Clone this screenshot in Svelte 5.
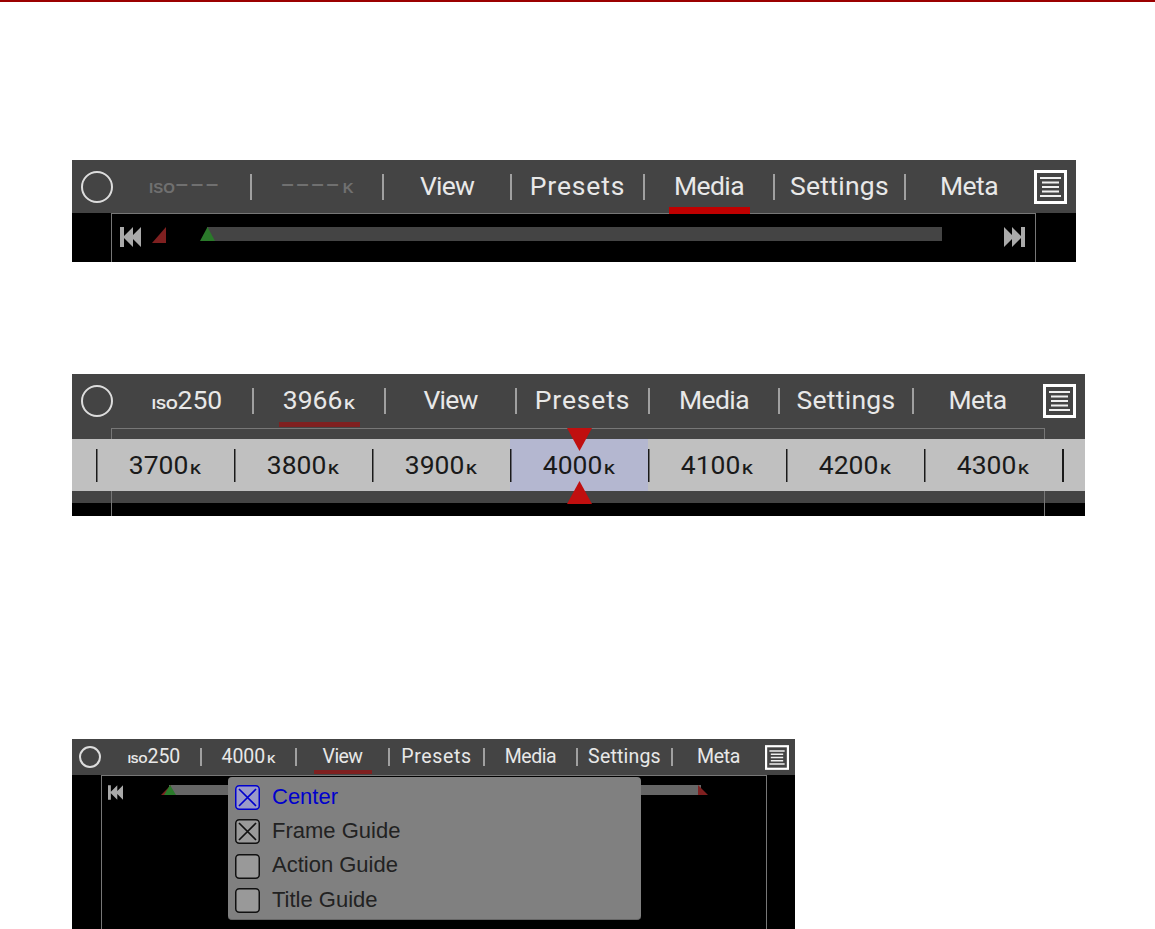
<script lang="ts">
  // Three states of the camera's top menu bar, stacked on a white manual page.
  // track: the original typeface has other proportions, so each label is nudged.
  const LABEL = [
    { name: "View", track: -0.03 },
    { name: "Presets", track: 0.032 },
    { name: "Media", track: -0.022 },
    { name: "Settings", track: 0.01 },
    { name: "Meta", track: -0.02 },
  ];

  const mediaBar = {
    widths: [130, 132, 128, 133, 130, 131, 126],
    iso: "–––",
    kelvin: "––––",
    dim: true,
    active: "Media",
  };
  const kelvinBar = {
    widths: [132, 132, 131, 133, 130, 134, 127],
    iso: "250",
    kelvin: "3966",
    dim: false,
    active: "kelvin",
  };
  const viewBar = {
    widths: [94, 95, 93, 95, 93, 95, 91],
    iso: "250",
    kelvin: "4000",
    dim: false,
    active: "View",
  };

  const temps = [3700, 3800, 3900, 4000, 4100, 4200, 4300];
  const guides = [
    { name: "Center", on: true, focus: true },
    { name: "Frame Guide", on: true, focus: false },
    { name: "Action Guide", on: false, focus: false },
    { name: "Title Guide", on: false, focus: false },
  ];
</script>

{#snippet skip(flip: boolean)}
  <svg class="skip" class:flip viewBox="0 0 21 20" aria-hidden="true">
    <path d="M0 0h4v20H0zM3 10 13 0v20zM11 10 21 0v20z" />
  </svg>
{/snippet}

{#snippet bar(b: typeof mediaBar)}
  <div class="nav">
    <div class="lead"><span class="circle"></span></div>
    <div class="cell iso-cell" class:dim={b.dim} style="width:{b.widths[0]}px">
      <span class="small">ISO</span><span class="num" class:dash={b.dim}>{b.iso}</span>
    </div>
    <div class="cell" class:dim={b.dim} style="width:{b.widths[1]}px">
      <span class="num" class:dash={b.dim}>{b.kelvin}</span><span class="small k">K</span>
      {#if b.active === "kelvin"}<span class="under dull"></span>{/if}
    </div>
    {#each LABEL as item, i}
      <div class="cell" class:last={item.name === "Meta"} style="width:{b.widths[i + 2]}px">
        <span style="letter-spacing:{item.track}em">{item.name}</span>
        {#if b.active === item.name}<span class="under" class:dull={item.name === "View"}></span>{/if}
      </div>
    {/each}
    <svg class="menu-icon" viewBox="0 0 33 34" aria-hidden="true">
      <rect x="1.5" y="1.5" width="30" height="31" fill="none" stroke="#fff" stroke-width="3" />
      <path d="M6 8h21M8 12.5h17M8 17h17M8 21.5h17M6 26h21" stroke="#f0f0f0" stroke-width="2" />
    </svg>
  </div>
{/snippet}

<main class="page">
  <section class="panel one">
    {@render bar(mediaBar)}
    <div class="frame">
      {@render skip(false)}
      <span class="mark-red"></span>
      <div class="track"><span class="mark-green"></span></div>
      {@render skip(true)}
    </div>
  </section>

  <section class="panel two">
    {@render bar(kelvinBar)}
    <div class="frame">
      <span class="tri down"></span>
      <span class="tri up"></span>
    </div>
    <div class="strip">
      {#each temps as t}
        <div class="temp" class:picked={t === 4000}>
          <span>{t}</span><span class="small k">K</span>
        </div>
      {/each}
      <span class="temp-end"></span>
    </div>
  </section>

  <section class="panel three">
    {@render bar(viewBar)}
    <div class="frame">
      {@render skip(false)}
      <div class="track">
        <span class="mark-red"></span>
        <span class="mark-green"></span>
        <span class="mark-end"></span>
      </div>
    </div>
    <div class="guides">
      {#each guides as g}
        <div class="guide" class:focus={g.focus}>
          <svg class="check" viewBox="0 0 25 25" aria-hidden="true">
            <rect x="0.75" y="0.75" width="23.5" height="23.5" rx="3.5" />
            {#if g.on}<path d="M4 4 21 21M21 4 4 21" />{/if}
          </svg>
          <span class="guide-name">{g.name}</span>
        </div>
      {/each}
    </div>
  </section>
</main>

<style>
  :global(body) {
    margin: 0;
    background: #fff;
  }

  .page {
    height: 927px;
    border-top: 2px solid #9b0000;
    overflow: hidden;
    font-family: Roboto, "Liberation Sans", sans-serif;
  }

  .panel {
    position: relative;
    margin-left: 72px;
    background: #000;
    overflow: hidden;
  }

  .one {
    width: 1004px;
    height: 102px;
    margin-top: 158px;
    --nav-h: 53px;
    --lead: 50px;
    --fs: 26.5px;
    --small: 15px;
    --sep: 26px;
    --lh: 24px;
    --under-w: 81px;
    --under-h: 7px;
    --circle: 32px;
    --ring: 2.5px;
  }

  .two {
    width: 1013px;
    height: 142px;
    margin-top: 112px;
    background: linear-gradient(#444 0 129px, #000 129px);
    --nav-h: 54px;
    --lead: 50px;
    --fs: 26.5px;
    --small: 15px;
    --sep: 26px;
    --lh: 24px;
    --under-w: 81px;
    --under-h: 5px;
    --circle: 32px;
    --ring: 2.5px;
  }

  .three {
    width: 723px;
    height: 190px;
    margin-top: 223px;
    --nav-h: 36px;
    --lead: 36px;
    --fs: 19.5px;
    --small: 11.5px;
    --sep: 18px;
    --lh: 18px;
    --under-w: 58px;
    --under-h: 4px;
    --circle: 22px;
    --ring: 2px;
  }

  .nav {
    display: flex;
    align-items: center;
    height: var(--nav-h);
    background: #444;
    color: #e8e8e8;
    font-size: var(--fs);
    line-height: 1;
  }

  .lead {
    display: flex;
    justify-content: center;
    width: var(--lead);
  }

  .circle {
    box-sizing: border-box;
    width: var(--circle);
    height: var(--circle);
    border: var(--ring) solid #ddd;
    border-radius: 50%;
  }

  .cell {
    position: relative;
    display: flex;
    align-items: baseline;
    justify-content: center;
    height: var(--sep);
    line-height: var(--lh);
    border-right: 2px solid #a0a0a0;
    box-sizing: border-box;
    white-space: nowrap;
  }

  .cell.last {
    border-right: 0;
  }

  .one .iso-cell {
    padding-right: 3px;
  }

  .dim {
    color: #707070;
  }

  .dash {
    font-size: 0.82em;
    letter-spacing: 0.05em;
    font-weight: 500;
  }

  .small {
    font-size: var(--small);
    font-weight: 700;
    font-family: "Liberation Sans", sans-serif;
  }

  .k {
    margin-left: 2px;
  }

  .under {
    position: absolute;
    left: 50%;
    width: var(--under-w);
    height: var(--under-h);
    margin-left: calc(var(--under-w) / -2);
    background: #c00000;
  }

  .under.dull {
    background: #7f2020;
  }

  .one .under {
    bottom: -14px;
  }

  .two .under {
    bottom: -13px;
  }

  .three .under {
    bottom: -8px;
  }

  .menu-icon {
    width: 33px;
    height: 34px;
    margin-left: auto;
    margin-right: 9px;
  }

  .three .menu-icon {
    width: 24px;
    height: 25px;
    margin-right: 6px;
  }

  .frame {
    display: flex;
    align-items: flex-start;
    box-sizing: border-box;
    height: 100%;
    border: 1px solid #777;
    border-bottom: 0;
    margin: 0 40px 0 39px;
  }

  .one .frame {
    padding: 13px 10px 0 8px;
  }

  .skip {
    flex: none;
    width: 21px;
    height: 20px;
    fill: #aaa;
  }

  .skip.flip {
    transform: scaleX(-1);
    margin-left: 62px;
  }

  .track {
    position: relative;
    flex: 1;
    height: 14px;
    background: #444;
  }

  .one .track {
    margin-left: 41px;
  }

  .mark-red {
    flex: none;
    width: 14px;
    height: 16px;
    margin-left: 11px;
    background: #7f2020;
    clip-path: polygon(100% 0, 100% 100%, 0 100%);
  }

  .mark-green {
    position: absolute;
    left: -7px;
    top: 0;
    width: 15px;
    height: 14px;
    background: #2a7a2a;
    clip-path: polygon(50% 0, 100% 100%, 0 100%);
  }

  /* The view panel's smaller timeline */
  .three .frame {
    margin: 0 28px 0 29px;
    padding: 9px 0 0 6px;
  }

  .three .skip {
    width: 15px;
    height: 15px;
  }

  .three .track {
    flex: none;
    width: 532px;
    height: 10px;
    margin-left: 46px;
    background: #666;
  }

  .three .mark-red {
    position: absolute;
    left: -8px;
    top: 0;
    width: 10px;
    height: 10px;
    margin: 0;
  }

  .three .mark-green {
    left: -5px;
    width: 12px;
    height: 10px;
  }

  .mark-end {
    position: absolute;
    right: -7px;
    top: 0;
    width: 10px;
    height: 10px;
    background: #7f2020;
    clip-path: polygon(0 0, 100% 100%, 0 100%);
  }

  /* Kelvin picker: the strip covers the frame, the triangles cover the strip */
  .two .frame {
    height: 88px;
    position: relative;
  }

  .strip {
    position: absolute;
    left: 0;
    right: 0;
    top: 65px;
    z-index: 1;
    display: flex;
    height: 52px;
    padding-left: 24px;
    background: #c0c0c0;
  }

  .temp {
    display: flex;
    align-items: baseline;
    justify-content: center;
    flex: none;
    width: 138px;
    line-height: 52px;
    font-size: 26.5px;
    color: #1a1a1a;
    background: linear-gradient(#1a1a1a, #1a1a1a) 0 10px / 1.5px 33px no-repeat;
  }

  .temp.picked {
    background:
      linear-gradient(#1a1a1a, #1a1a1a) 0 10px / 1.5px 33px no-repeat,
      #b4b7d0;
  }

  .temp-end {
    flex: none;
    width: 1.5px;
    height: 33px;
    margin-top: 10px;
    background: #1a1a1a;
  }

  .tri {
    position: absolute;
    left: 455px;
    width: 25px;
    height: 23px;
    background: #c00f0f;
    z-index: 2;
  }

  .tri.down {
    top: -1px;
    clip-path: polygon(0 0, 100% 0, 50% 100%);
  }

  .tri.up {
    top: 52px;
    clip-path: polygon(50% 0, 100% 100%, 0 100%);
  }

  /* Dropdown from the View tab */
  .guides {
    position: absolute;
    left: 156px;
    top: 38px;
    box-sizing: border-box;
    width: 413px;
    height: 143px;
    padding: 8px 7px;
    border-radius: 4px;
    background: #808080;
    border-bottom: 1px solid #666;
    z-index: 2;
  }

  .guide {
    display: flex;
    align-items: center;
    gap: 12px;
    height: 25px;
    margin-bottom: 9.4px;
    font-family: "Liberation Sans", sans-serif;
    font-size: 22px;
    color: #222;
  }

  .guide-name {
    padding-bottom: 2px;
  }

  .check {
    flex: none;
    width: 25px;
    height: 25px;
  }

  .check rect {
    fill: #999;
    stroke: #111;
    stroke-width: 1.5;
  }

  .check path {
    fill: none;
    stroke: #111;
    stroke-width: 1.7;
  }

  .focus {
    color: #0000cc;
  }

  .focus .check rect {
    fill: #9a9ac8;
    stroke: #0000cc;
  }

  .focus .check path {
    stroke: #0000cc;
  }
</style>
